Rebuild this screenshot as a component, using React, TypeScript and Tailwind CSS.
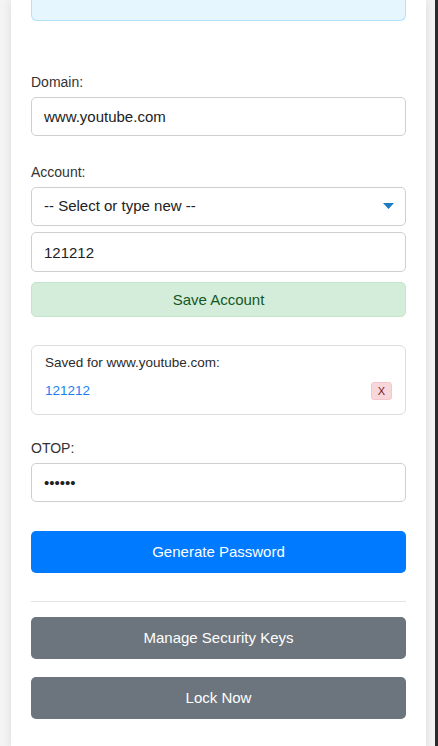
import React, { useState } from "react";

const App: React.FC = () => {
  const [domain, setDomain] = useState("www.youtube.com");
  const [account, setAccount] = useState("121212");
  const [otop, setOtop] = useState("123456");
  const saved = ["121212"];

  return (
    <div className="flex min-h-screen bg-[#f4f4f4] font-['Liberation_Sans',Arial,sans-serif] text-[#333]">
      <div className="flex-1 pl-[11px] pr-[9px]">
        <div className="bg-white px-5 pb-8 shadow-[0_0_10px_rgba(0,0,0,0.1)]">
          {/* status box, scrolled mostly out of view */}
          <div className="h-[21px] rounded-b-[6px] border-x border-b border-[#b3e0fb] bg-[#e6f6fe]" />

          {/* --- Domain --- */}
          <label className="mt-[53px] mb-[6px] block text-[14px] leading-[17px]">Domain:</label>
          <input
            value={domain}
            onChange={(e) => setDomain(e.target.value)}
            className="block h-[39px] w-full rounded-[5px] border border-[#cfcfcf] px-3 text-[15px] text-[#222] outline-none"
          />

          {/* --- Account --- */}
          <label className="mt-[28px] mb-[6px] block text-[14px] leading-[17px]">Account:</label>
          <div className="relative">
            <select className="block h-[39px] w-full appearance-none rounded-[5px] border border-[#cfcfcf] bg-white px-3 text-[15px] text-[#222] outline-none">
              <option>-- Select or type new --</option>
              {saved.map((s) => (
                <option key={s}>{s}</option>
              ))}
            </select>
            <svg
              className="pointer-events-none absolute right-[12px] top-[16px]"
              width="11"
              height="6"
              viewBox="0 0 11 6"
            >
              <path d="M0 0 H11 L5.5 6 Z" fill="#1b7bbf" />
            </svg>
          </div>
          <input
            value={account}
            onChange={(e) => setAccount(e.target.value)}
            className="mt-[6px] block h-[40px] w-full rounded-[5px] border border-[#cfcfcf] px-3 text-[15px] text-[#222] outline-none"
          />
          <button className="mt-[10px] block h-[35px] w-full rounded-[5px] border border-[#c3e6cb] bg-[#d4edda] pt-[1px] text-[15px] text-[#155724]">
            Save Account
          </button>

          {/* --- Saved accounts --- */}
          <div className="mt-[28px] rounded-[6px] border border-[#dddddd] px-[13px] pt-[9px] pb-[14px]">
            <div className="text-[13.5px] leading-[16px] text-[#2b2b2b]">Saved for {domain}:</div>
            {saved.map((s) => (
              <div key={s} className="mt-[11px] flex h-[18px] items-center justify-between">
                <span className="text-[13.5px] text-[#1a7ff0]">{s}</span>
                <button className="flex h-[18px] w-[21px] items-center justify-center rounded-[3px] border border-[#f5c6cb] bg-[#f8d7da] text-[11px] leading-none text-[#721c24]">
                  X
                </button>
              </div>
            ))}
          </div>

          {/* --- OTOP --- */}
          <label className="mt-[25px] mb-[6px] block text-[14px] leading-[17px]">OTOP:</label>
          <input
            type="password"
            value={otop}
            onChange={(e) => setOtop(e.target.value)}
            className="block h-[39px] w-full rounded-[5px] border border-[#cfcfcf] px-3 text-[15px] text-[#222] outline-none"
          />

          <button className="mt-[29px] block h-[42px] w-full rounded-[5px] bg-[#007bff] text-[15px] text-white">
            Generate Password
          </button>

          <hr className="mt-[28px] border-t border-[#e2e2e2]" />

          <button className="mt-[15px] block h-[42px] w-full rounded-[5px] bg-[#6c757d] text-[15px] text-white">
            Manage Security Keys
          </button>
          <button className="mt-[18px] block h-[42px] w-full rounded-[5px] bg-[#6c757d] text-[15px] text-white">
            Lock Now
          </button>
        </div>
      </div>
      <div className="w-[3px] bg-[#2b2b2b]" />
    </div>
  );
};

export default App;
